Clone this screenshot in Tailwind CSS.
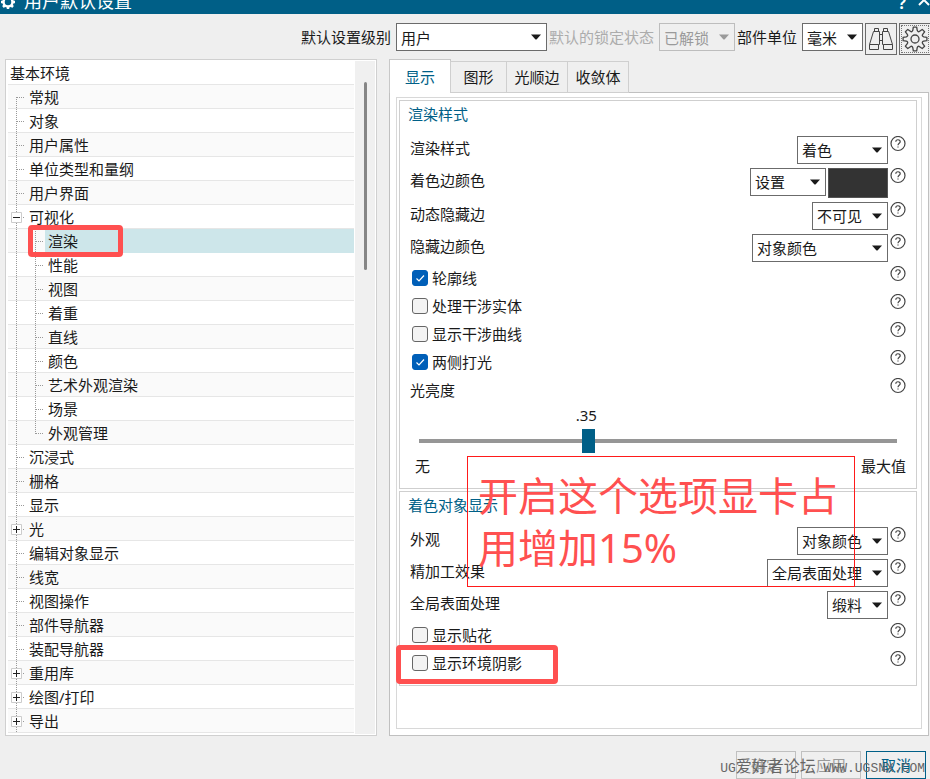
<!DOCTYPE html>
<html lang="zh-CN">
<head>
    <meta charset="UTF-8">
    <meta name="viewport" content="width=device-width, initial-scale=1.0">
    <title>用户默认设置</title>
    <script src="https://cdn.jsdelivr.net/npm/@tailwindcss/browser@4"></script>
    <style>
        body {
            font-family: 'Noto Sans', 'Noto Sans CJK SC', sans-serif;
        }
        .slider::-webkit-slider-runnable-track {
            height: 4px;
            background: #969696;
        }
        .slider::-webkit-slider-thumb {
            -webkit-appearance: none;
            width: 13px;
            height: 24px;
            margin-top: -10px;
            background: #005f87;
        }
    </style>
</head>
<body class="bg-[#efefef] text-[15px] text-[#1a1a1a] overflow-hidden">
    <svg class="hidden">
        <symbol id="gear" viewBox="0 0 28 28">
            <path fill="none" stroke="currentColor" stroke-width="1.3" stroke-linejoin="round" d="M25.9 12.3V15.7L22.7 16.2Q20.5 17 21.7 18.6L23.6 21.2L21.2 23.6L18.6 21.7Q17 20.5 16.2 22.7L15.7 25.9H12.3L11.8 22.7Q11 20.5 9.4 21.7L6.8 23.6L4.4 21.2L6.3 18.6Q7.5 17 5.3 16.2L2.1 15.7V12.3L5.3 11.8Q7.5 11 6.3 9.4L4.4 6.8L6.8 4.4L9.4 6.3Q11 7.5 11.8 5.3L12.3 2.1H15.7L16.2 5.3Q17 7.5 18.6 6.3L21.2 4.4L23.6 6.8L21.7 9.4Q20.5 11 22.7 11.8Z"/>
            <circle cx="14" cy="14" r="4" fill="none" stroke="currentColor" stroke-width="1.3"/>
        </symbol>
        <symbol id="arrow" viewBox="0 0 10 6">
            <path fill="currentColor" d="M0 0.5H10L5.5 5.5H4.5Z"/>
        </symbol>
        <symbol id="help" viewBox="0 0 16 16">
            <circle cx="8" cy="7.5" r="7" fill="none" stroke="currentColor" stroke-width="1.2"/>
            <path fill="none" stroke="currentColor" stroke-width="1.2" d="M5.8 5.8C5.8 3.1 10.2 3.1 10.2 5.7C10.2 7.3 8 7.3 8 9.3"/>
            <path fill="currentColor" d="M7.4 10.4H8.6V11.6H7.4Z"/>
        </symbol>
    </svg>

    <div class="h-screen flex flex-col">
        <!-- Title Bar -->
        <header class="h-[14px] shrink-0 flex items-end overflow-hidden bg-[#005f87] text-white">
            <svg class="w-4 h-4 mb-1 shrink-0" viewBox="0 0 16 16">
                <circle cx="8" cy="8" r="4.5" fill="none" stroke="currentColor" stroke-width="2.5"/>
                <path stroke="currentColor" stroke-width="2.5" d="M8 1V4M8 12V15M1 8H4M12 8H15M3 3L5 5M11 11L13 13M3 13L5 11M11 5L13 3"/>
            </svg>
            <h1 class="text-[18px] leading-6 ml-2 mb-px flex-1">用户默认设置</h1>
            <button aria-label="帮助" class="text-[16px] font-bold leading-5 w-6 mb-px">?</button>
            <button aria-label="关闭" class="w-4 h-5 flex items-end justify-end">
                <svg class="w-3 h-3 mb-2" viewBox="0 0 12 12"><path stroke="currentColor" stroke-width="2" d="M1 1L11 11M11 1L1 11"/></svg>
            </button>
        </header>

        <!-- Toolbar -->
        <div class="flex justify-end items-start pt-[9px] pb-1 -mr-px leading-7 whitespace-nowrap shrink-0">
            <label for="level" class="mr-[5px]">默认设置级别</label>
            <div class="relative mr-[2px]">
                <select id="level" class="block appearance-none w-[151px] h-7 pl-1 bg-white border border-[#6b6b6b]"><option>用户</option></select>
                <svg class="absolute right-[6px] top-[11px] w-[10px] h-[6px] pointer-events-none"><use href="#arrow"/></svg>
            </div>
            <label for="lock" class="mr-[5px] text-[#acacac]">默认的锁定状态</label>
            <div class="relative mr-[2px] text-[#9a9a9a]">
                <select id="lock" disabled class="block appearance-none w-[76px] h-7 pl-1 border border-[#bdbdbd] opacity-100"><option>已解锁</option></select>
                <svg class="absolute right-[6px] top-[11px] w-[10px] h-[6px] pointer-events-none"><use href="#arrow"/></svg>
            </div>
            <label for="unit" class="mr-[5px]">部件单位</label>
            <div class="relative mr-[2px]">
                <select id="unit" class="block appearance-none w-[61px] h-7 pl-1 bg-white border border-[#6b6b6b]"><option>毫米</option></select>
                <svg class="absolute right-[6px] top-[11px] w-[10px] h-[6px] pointer-events-none"><use href="#arrow"/></svg>
            </div>
            <button aria-label="查找" class="w-8 h-8 border border-[#6b6b6b] flex items-center justify-center mr-[2px]">
                <svg class="w-6 h-6" viewBox="0 0 24 24" fill="none" stroke="#444">
                    <path d="M5.5 4.5V1.5H9.5V4.5M14.5 4.5V1.5H18.5V4.5M4.5 4.5H10.5V17.5M19.5 4.5H13.5V17.5M4.5 4.5L0.5 17.5V22.5H9.5V17.5H0.5M19.5 4.5L23.5 17.5V22.5H14.5V17.5H23.5M10.5 7.5H13.5M10.5 13.5H13.5M9.5 17.5H10.5M13.5 17.5H14.5"/>
                </svg>
            </button>
            <button aria-label="设置" class="w-8 h-8 border border-[#6b6b6b] p-px">
                <span class="w-full h-full flex items-center justify-center border border-dotted border-[#777] text-[#444]">
                    <svg class="w-7 h-7 shrink-0"><use href="#gear"/></svg>
                </span>
            </button>
        </div>

        <main class="flex flex-1 min-h-0">
            <!-- Category Tree -->
            <nav class="w-2/5 ml-[5px] shrink-0 flex border border-[#d0d0d0] bg-white p-px overflow-hidden">
                <ul id="tree" class="flex-1 min-w-0 leading-6 pl-px"></ul>
                <div class="w-5 ml-px bg-[#f0f0f0] pt-[21px] flex justify-center">
                    <div class="w-[3px] h-[188px] bg-[#868686] rounded-sm"></div>
                </div>
            </nav>

            <!-- Settings Pages -->
            <section class="flex-1 min-w-0 flex flex-col ml-3 mr-px">
                <div class="flex items-end relative leading-7 -mb-px">
                    <button class="h-[34px] px-[15px] bg-white border border-b-0 border-[#c8c8c8] text-[#005f87]">显示</button>
                    <button class="h-8 min-w-[57px] px-[7px] -ml-px border border-[#cfcfcf]">图形</button>
                    <button class="h-8 min-w-[62px] px-[7px] -ml-px border border-[#cfcfcf]">光顺边</button>
                    <button class="h-8 min-w-[62px] px-[7px] -ml-px border border-[#cfcfcf]">收敛体</button>
                </div>
                <div class="flex-1 bg-white border border-[#c0c0c0] px-[6px] pt-1 pb-[6px]">
                    <div class="h-full border border-[#d8d8d8] px-[2px] pr-1 pt-[2px]">
                        <div class="relative border border-[#cfcfcf] mb-[2px] pb-[10px]">
                            <h2 class="pl-2 leading-[26px] mb-[9px] text-[#005f87]">渲染样式</h2>
                            <div id="renderRows" class="flex flex-col gap-1 pl-[10px] pr-[10px]"></div>
                            <div class="pl-[19px] pr-[19px]">
                                <div class="relative h-6 mt-px">
                                    <output for="bright" class="absolute left-[35%] -translate-x-1/2 leading-6">.35</output>
                                </div>
                                <input id="bright" type="range" value="35" class="slider block appearance-none w-full h-6 mt-[2px] bg-transparent">
                            </div>
                            <div class="flex justify-between pl-[15px] pr-[10px] leading-6 mt-px">
                                <span>无</span>
                                <span>最大值</span>
                            </div>
                            <!-- Note -->
                            <p class="absolute z-10 left-[67px] top-[355px] w-[388px] h-[131px] border border-[#ff1a1a] pl-[10px] pt-[13px] text-[40px] leading-[52px] text-[#ff5050] pointer-events-none">开启这个选项显卡占用增加15%</p>
                        </div>
                        <div class="border border-[#cfcfcf] pb-[10px]">
                            <h2 class="pl-2 leading-[26px] mb-[9px] text-[#005f87]">着色对象显示</h2>
                            <div id="shadeRows" class="flex flex-col gap-1 pl-[10px] pr-[10px]"></div>
                        </div>
                    </div>
                </div>
            </section>
        </main>

        <!-- Footer -->
        <footer class="relative flex justify-end gap-[5px] pt-[14px] pr-1 mt-px leading-6 shrink-0">
            <button class="w-[60px] h-7 border border-[#c0c0c0] text-[#9a9a9a]">确定</button>
            <button class="w-[60px] h-7 border border-[#c0c0c0] text-[#9a9a9a]">应用</button>
            <button class="w-[60px] h-7 border border-[#005f87] text-[#005f87]">取消</button>
            <p class="absolute right-[5px] top-[17px] text-[16px] leading-6 text-[#666] whitespace-pre pointer-events-none"><span class="font-['Liberation_Mono'] text-[13px]">UG</span>爱好者论坛<span class="font-['Liberation_Mono'] text-[13px]"> WWW.UGSNX.COM</span></p>
        </footer>
    </div>

    <script>
        const tree = [
            { name: '基本环境', level: 0 },
            { name: '常规', level: 1 },
            { name: '对象', level: 1 },
            { name: '用户属性', level: 1 },
            { name: '单位类型和量纲', level: 1 },
            { name: '用户界面', level: 1 },
            { name: '可视化', level: 1, open: true },
            { name: '渲染', level: 2, selected: true },
            { name: '性能', level: 2 },
            { name: '视图', level: 2 },
            { name: '着重', level: 2 },
            { name: '直线', level: 2 },
            { name: '颜色', level: 2 },
            { name: '艺术外观渲染', level: 2 },
            { name: '场景', level: 2 },
            { name: '外观管理', level: 2, last: true },
            { name: '沉浸式', level: 1 },
            { name: '栅格', level: 1 },
            { name: '显示', level: 1 },
            { name: '光', level: 1, open: false },
            { name: '编辑对象显示', level: 1 },
            { name: '线宽', level: 1 },
            { name: '视图操作', level: 1 },
            { name: '部件导航器', level: 1 },
            { name: '装配导航器', level: 1 },
            { name: '重用库', level: 1, open: false },
            { name: '绘图/打印', level: 1, open: false },
            { name: '导出', level: 1, open: false },
        ];

        const renderRows = [
            { id: 'style', label: '渲染样式', value: '着色', width: 91 },
            { id: 'edge', label: '着色边颜色', value: '设置', width: 76, swatch: true },
            { id: 'hidden', label: '动态隐藏边', value: '不可见', width: 76 },
            { id: 'hiddenColor', label: '隐藏边颜色', value: '对象颜色', width: 136 },
            { id: 'silhouette', label: '轮廓线', checked: true },
            { id: 'solids', label: '处理干涉实体', checked: false },
            { id: 'curves', label: '显示干涉曲线', checked: false },
            { id: 'twoSided', label: '两侧打光', checked: true },
            { id: 'bright', label: '光亮度' },
        ];

        const shadeRows = [
            { id: 'look', label: '外观', value: '对象颜色', width: 91 },
            { id: 'finish', label: '精加工效果', value: '全局表面处理', width: 121 },
            { id: 'global', label: '全局表面处理', value: '缎料', width: 61 },
            { id: 'decals', label: '显示贴花', checked: false },
            { id: 'shadow', label: '显示环境阴影', checked: false, marked: true },
        ];

        // Dotted guide lines and the +/- box in front of a tree item
        function guides(item, first) {
            if (item.level === 0) return '<span class="w-[2px]"></span>';
            const box = item.open === undefined ? '' : `
                <svg class="absolute left-[3px] top-[7px] w-[11px] h-[11px]" viewBox="0 0 11 11">
                    <path fill="#fff" stroke="#ccc" d="M0.5 0.5H10.5V10.5H0.5Z"/>
                    <path stroke="#222" d="M2 5.5H9${item.open ? '' : 'M5.5 2V9'}"/>
                </svg>`;
            const line1 = `<path stroke="#999" stroke-dasharray="1 1" d="M8.5 ${first ? 12 : 0}V24${item.level === 1 ? 'M9 12.5H17' : ''}"/>`;
            const line2 = item.level === 2 ? `<path stroke="#999" stroke-dasharray="1 1" d="M27.5 0V${item.last ? 13 : 24}M28 12.5H36"/>` : '';
            const size = item.level === 1 ? 'w-[21px]' : 'w-[37px]';
            return `<svg class="${size} h-6 shrink-0">${line1}${line2}</svg>${box}`;
        }

        document.getElementById('tree').innerHTML = tree.map((item, i) => `
            <li class="relative flex h-6 border-b border-[#e6e6e6] ${i % 2 ? 'bg-[#fafafa]' : 'bg-white'}">
                ${guides(item, i === 1)}
                <a href="#" class="flex-1 h-6 ${item.level === 2 ? 'pl-[3px]' : ''} ${item.selected ? 'bg-[#cde6ea]' : ''}">${item.name}</a>
                ${item.selected ? '<span class="absolute z-10 left-5 -top-1 w-[95px] h-8 border-5 border-[#ff5050] rounded-sm"></span>' : ''}
            </li>
        `).join('');

        function control(row) {
            if (row.checked !== undefined) {
                return `
                    <label class="relative flex items-center h-6 pl-[2px] gap-1">
                        <input type="checkbox" id="${row.id}" ${row.checked ? 'checked' : ''} class="peer appearance-none w-4 h-4 rounded-[3px] border border-[#666] bg-[#f3f3f3] checked:bg-[#005fb8] checked:border-[#005fb8]">
                        <svg class="hidden peer-checked:block absolute left-[2px] top-1 w-4 h-4 pointer-events-none" viewBox="0 0 16 16"><path fill="none" stroke="#fff" stroke-width="1.2" d="M4.5 8.5L7 11L12 5.5"/></svg>
                        ${row.label}
                        ${row.marked ? '<span class="absolute -left-[14px] -top-[6px] w-[162px] h-[39px] border-5 border-[#ff5050] rounded-sm pointer-events-none"></span>' : ''}
                    </label>
                    <span class="flex-1"></span>`;
            }
            if (!row.value) return `<label for="${row.id}" class="flex-1 leading-6">${row.label}</label>`;
            return `
                <label for="${row.id}" class="flex-1 leading-6">${row.label}</label>
                <div class="relative">
                    <select id="${row.id}" style="width: ${row.width}px" class="block appearance-none h-7 pl-1 bg-white border border-[#6b6b6b]"><option>${row.value}</option></select>
                    <svg class="absolute right-[6px] top-[11px] w-[10px] h-[6px] pointer-events-none"><use href="#arrow"/></svg>
                </div>
                ${row.swatch ? '<button aria-label="颜色" class="w-[60px] h-[30px] ml-[2px] bg-[#333] border border-[#555]"></button>' : ''}`;
        }

        function render(id, rows) {
            document.getElementById(id).innerHTML = rows.map(row => `
                <div class="flex items-start">
                    ${control(row)}
                    <button aria-label="帮助" class="ml-[2px] text-[#444]"><svg class="w-4 h-4"><use href="#help"/></svg></button>
                </div>
            `).join('');
        }

        render('renderRows', renderRows);
        render('shadeRows', shadeRows);
    </script>
</body>
</html>
